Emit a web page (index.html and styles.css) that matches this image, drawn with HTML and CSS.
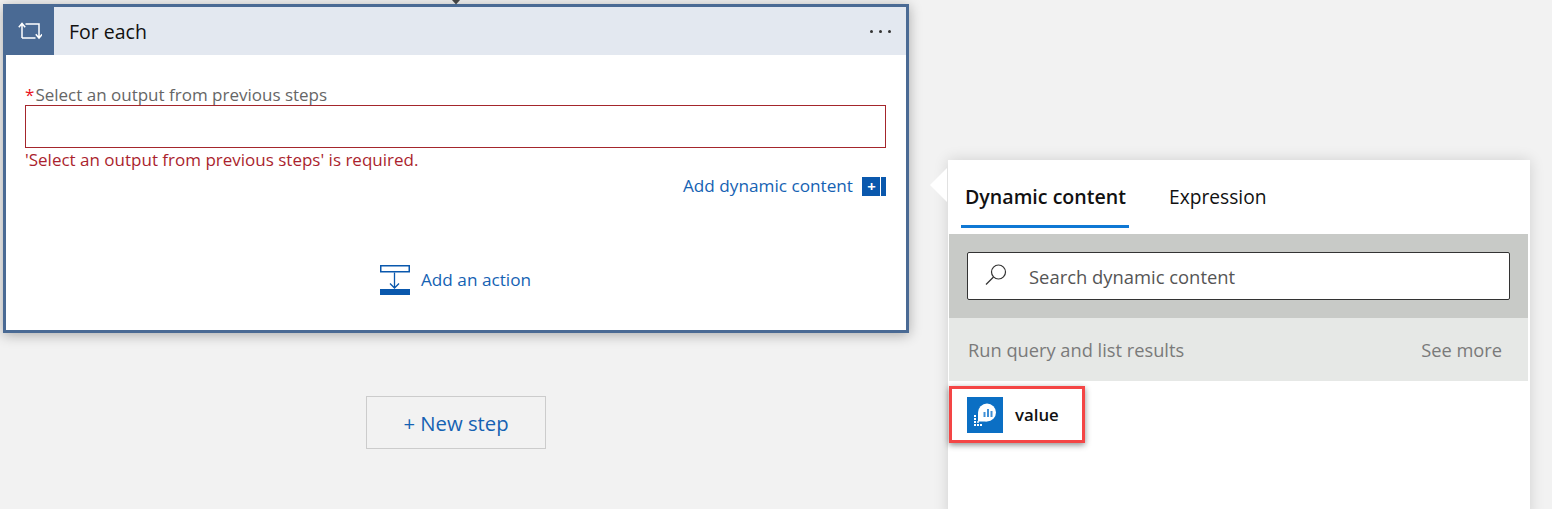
FILE: index.html
```html
<!DOCTYPE html>
<html lang="en">
<head>
<meta charset="utf-8">
<title>For each</title>
<link rel="stylesheet" href="styles.css">
</head>
<body>
<div class="canvas">
  <div class="flow">
    <svg class="connector" width="12" height="5" viewBox="0 0 12 5"><path d="M2 0h8L6 4.500z" fill="#444"/></svg>
    <section class="card">
      <header class="card-head">
        <div class="card-icon">
          <svg width="24" height="18" viewBox="0 0 24 18" fill="none" stroke="#fff" stroke-width="1.500">
            <path d="M4 16V1.500M.8 5.200L4 1.500l3.200 3.700"/>
            <path d="M4 16h13.500M7.500 2H21v14M17.800 12.300L21 16l3.200-3.700"/>
          </svg>
        </div>
        <h2 class="card-title">For each</h2>
        <div class="dots"><i></i><i></i><i></i></div>
      </header>
      <div class="card-body">
        <label class="field-label"><span class="star">*</span>Select an output from previous steps</label>
        <div class="field-input"></div>
        <div class="field-error">'Select an output from previous steps' is required.</div>
        <div class="dyn-row">
          <a class="link">Add dynamic content</a>
          <span class="dyn-badge"><b>+</b></span>
        </div>
        <div class="action-row">
          <svg width="30" height="30" viewBox="0 0 30 30" fill="none">
            <rect x=".75" y=".75" width="28.500" height="6" fill="#fff" stroke="#0a58ad" stroke-width="1.500"/>
            <path d="M14.500 7.500v15.500M10 18.500l4.500 4.500 4.500-4.500" stroke="#0a58ad" stroke-width="1.300"/>
            <rect y="24" width="30" height="6" fill="#0a58ad"/>
          </svg>
          <a class="link">Add an action</a>
        </div>
      </div>
    </section>
    <button class="new-step">+ New step</button>
  </div>
  <aside class="panel">
    <div class="tabs">
      <div class="tab active">Dynamic content</div>
      <div class="tab">Expression</div>
    </div>
    <div class="search-band">
      <div class="search-box">
        <svg width="24" height="24" viewBox="0 0 24 24" fill="none" stroke="#333" stroke-width="1.200"><circle cx="15.500" cy="8" r="7"/><path d="M10.500 13L3 20.500"/></svg>
        <span>Search dynamic content</span>
      </div>
    </div>
    <div class="group-band">
      <span>Run query and list results</span>
      <span class="see-more">See more</span>
    </div>
    <div class="result">
      <span class="result-icon">
        <svg width="36" height="36" viewBox="0 0 36 36">
          <circle cx="20" cy="15.500" r="9" fill="#fff"/>
          <path d="M11 15.500V24.500H20z" fill="#fff"/>
          <path d="M16.500 20v-5h2v5zM20 20v-8h2v8zM23.500 20v-6h2v6z" fill="#3e8fd6"/>
          <g fill="#fff"><rect x="7" y="18" width="2" height="2"/><rect x="7" y="21" width="2" height="2"/><rect x="7" y="24" width="2" height="2"/><rect x="7" y="27" width="2" height="2"/><rect x="10" y="27" width="2" height="2"/><rect x="13" y="27" width="2" height="2"/><rect x="10" y="24" width="2" height="2" opacity=".7"/></g>
        </svg>
      </span>
      <span class="result-text">value</span>
    </div>
  </aside>
</div>
</body>
</html>
```
FILE: styles.css
```css
* { box-sizing: border-box; }
html, body { margin: 0; height: 509px; overflow: hidden; }
body { font-family: "Open Sans", "Noto Sans", sans-serif; background: #f2f2f2; color: #111; }
.canvas { display: flex; align-items: flex-start; height: 509px; padding: 4px 0 0 3px; overflow: hidden; }
.flow { position: relative; width: 906px; display: flex; flex-direction: column; align-items: center; flex: none; }
.connector { position: absolute; left: 447px; top: -4px; }
.card { width: 906px; height: 329px; background: #fff; border: 3px solid #4a6a94; box-shadow: 0 2px 12px rgba(0,0,0,.3); display: flex; flex-direction: column; }
.card-head { height: 48px; background: #e3e8f0; display: flex; align-items: center; flex: none; }
.card-icon { width: 48px; height: 48px; background: #4a6a94; display: flex; align-items: center; justify-content: center; }
.card-title { margin: 2px 0 0 15px; font-size: 19.500px; font-weight: 400; line-height: 46px; flex: 1; color: #111; }
.dots { display: flex; gap: 6px; margin-right: 15px; }
.dots i { width: 3px; height: 3px; border-radius: 50%; background: #333; }
.card-body { padding: 30px 20px 0 19px; display: flex; flex-direction: column; }
.field-label { display: block; height: 20px; font-size: 17px; line-height: 20px; color: #666; }
.star { color: #e81123; margin-right: 1px; }
.field-input { height: 43px; border: 1px solid #a4262c; background: #fff; }
.field-error { margin-top: 1px; height: 22px; font-size: 17px; line-height: 22px; color: #ab1f2e; }
.dyn-row { margin-top: 2px; height: 26px; display: flex; align-items: center; justify-content: flex-end; gap: 9px; }
.link { color: #1562b3; font-size: 17.200px; line-height: 22px; }
.dyn-badge { width: 24px; height: 19px; background: #0a58ad; border-right: 5px solid #0a58ad; position: relative; color: #fff; display: flex; align-items: center; justify-content: center; }
.dyn-badge::after { content: ""; position: absolute; right: 0; top: 0; width: 1px; height: 19px; background: #fff; }
.dyn-badge b { font-size: 15px; line-height: 19px; font-weight: 700; }
.action-row { margin-top: 66px; display: flex; align-items: center; justify-content: center; gap: 11px; height: 30px; }
.new-step { margin-top: 63px; width: 180px; height: 53px; background: #f2f2f2; border: 1px solid #ccc; color: #1562b3; font: 400 20.300px/1 "Open Sans", "Noto Sans", sans-serif; padding: 1px 0 0; }
.panel { margin: 156px 0 0 39px; width: 582px; height: 360px; flex: none; background: #fff; padding: 0 2px 0 1px; box-shadow: 0 0 14px rgba(0,0,0,.14); position: relative; }
.panel::before { content: ""; position: absolute; left: -18px; top: 8px; width: 0; height: 0; border: 17px solid transparent; border-left: 0; border-right-color: #fff; }
.tabs { display: flex; height: 74px; padding-left: 12px; gap: 36px; }
.tab { height: 68px; font-size: 19.200px; line-height: 74px; padding: 0 4px; color: #111; }
.tab.active { font-size: 19.600px; font-weight: 600; border-bottom: 3px solid #0f78d4; padding-right: 3px; }
.search-band { height: 84px; background: #c8cac7; padding: 18px; }
.search-box { height: 48px; background: #fff; border: 1px solid #333; border-radius: 2px; display: flex; align-items: center; gap: 22px; padding-left: 15px; font-size: 18.400px; color: #555; }
.group-band { height: 63px; background: #e6e8e6; display: flex; align-items: center; justify-content: space-between; padding: 0 26px 0 19px; font-size: 18.250px; color: #7a7a7a; }
.result { margin-top: 5px; display: inline-flex; align-items: center; gap: 12px; width: 136px; height: 57px; padding-left: 15px; border: 3px solid #f44545; box-shadow: 0 2px 6px rgba(0,0,0,.45); background: #fff; }
.result-icon { width: 36px; height: 36px; background: #0b6fc4; display: block; flex: none; }
.result-text { font-size: 16.800px; font-weight: 600; color: #111; }
```
